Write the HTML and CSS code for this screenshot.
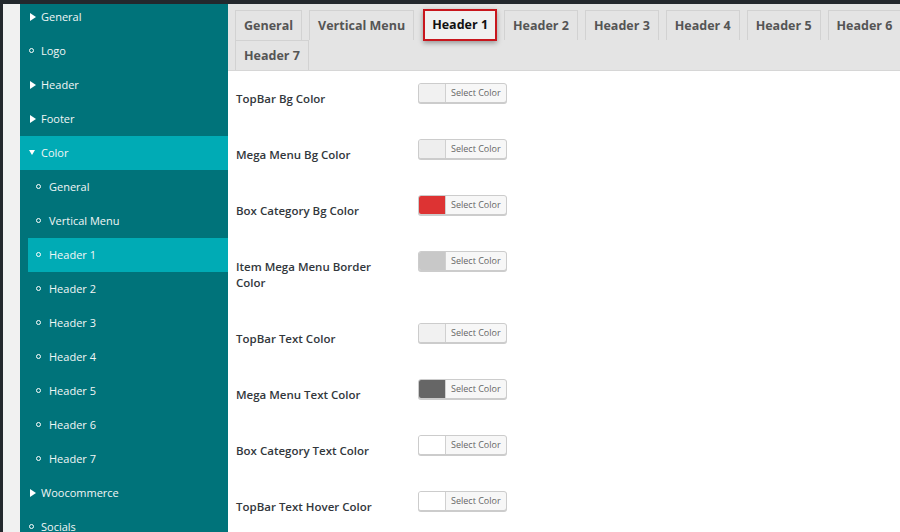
FILE: index.html
```html
<!DOCTYPE html>
<html>
<head>
<meta charset="utf-8">
<link rel="stylesheet" href="styles.css">
</head>
<body>
<div class="topbar"></div>
<div class="layout">
  <div class="edge"></div>
  <div class="gutter"></div>
  <nav class="sidebar">
    <div class="item first"><span class="ico tri-r"></span><span>General</span></div>
    <div class="item"><span class="ico ring"></span><span>Logo</span></div>
    <div class="item"><span class="ico tri-r"></span><span>Header</span></div>
    <div class="item"><span class="ico tri-r"></span><span>Footer</span></div>
    <div class="item active"><span class="ico tri-d"></span><span>Color</span></div>
    <div class="sub">
      <div class="item"><span class="ico ring"></span><span>General</span></div>
      <div class="item"><span class="ico ring"></span><span>Vertical Menu</span></div>
      <div class="item active"><span class="ico ring"></span><span>Header 1</span></div>
      <div class="item"><span class="ico ring"></span><span>Header 2</span></div>
      <div class="item"><span class="ico ring"></span><span>Header 3</span></div>
      <div class="item"><span class="ico ring"></span><span>Header 4</span></div>
      <div class="item"><span class="ico ring"></span><span>Header 5</span></div>
      <div class="item"><span class="ico ring"></span><span>Header 6</span></div>
      <div class="item"><span class="ico ring"></span><span>Header 7</span></div>
    </div>
    <div class="item"><span class="ico tri-r"></span><span>Woocommerce</span></div>
    <div class="item"><span class="ico ring"></span><span>Socials</span></div>
  </nav>
  <main class="main">
    <div class="tabs">
      <div class="tab">General</div>
      <div class="tab">Vertical Menu</div>
      <div class="tab current">Header 1</div>
      <div class="tab">Header 2</div>
      <div class="tab">Header 3</div>
      <div class="tab">Header 4</div>
      <div class="tab">Header 5</div>
      <div class="tab">Header 6</div>
      <div class="tab">Header 7</div>
    </div>
    <div class="form">
      <div class="row"><div class="label">TopBar Bg Color</div><div class="picker"><span class="swatch c-f1"></span><span class="txt">Select Color</span></div></div>
      <div class="row"><div class="label">Mega Menu Bg Color</div><div class="picker"><span class="swatch c-ee"></span><span class="txt">Select Color</span></div></div>
      <div class="row"><div class="label">Box Category Bg Color</div><div class="picker"><span class="swatch c-red"></span><span class="txt">Select Color</span></div></div>
      <div class="row"><div class="label">Item Mega Menu Border Color</div><div class="picker"><span class="swatch c-c8"></span><span class="txt">Select Color</span></div></div>
      <div class="row"><div class="label">TopBar Text Color</div><div class="picker"><span class="swatch c-f1"></span><span class="txt">Select Color</span></div></div>
      <div class="row"><div class="label">Mega Menu Text Color</div><div class="picker"><span class="swatch c-66"></span><span class="txt">Select Color</span></div></div>
      <div class="row"><div class="label">Box Category Text Color</div><div class="picker"><span class="swatch c-ff"></span><span class="txt">Select Color</span></div></div>
      <div class="row"><div class="label">TopBar Text Hover Color</div><div class="picker"><span class="swatch c-ff"></span><span class="txt">Select Color</span></div></div>
    </div>
  </main>
</div>
</body>
</html>
```
FILE: styles.css
```css
html, body {
  margin: 0;
  padding: 0;
  overflow: hidden;
  background: #fff;
  font-family: "Open Sans", "Noto Sans", sans-serif;
}
.topbar {
  height: 4px;
  background: #23282d;
}
.layout {
  display: flex;
  width: 950px;
  height: 528px;
  overflow: hidden;
}
.edge {
  width: 3px;
  background: #23282d;
  flex: none;
}
.gutter {
  width: 17px;
  background: #f1f1f1;
  flex: none;
}
.sidebar {
  width: 208px;
  flex: none;
  background: #00737a;
  color: #f2f6f6;
  font-size: 11px;
}
.item {
  height: 34px;
  display: flex;
  align-items: center;
  padding-left: 9px;
  padding-bottom: 1px;
  box-sizing: border-box;
}
.item.first {
  height: 30px;
  padding-bottom: 5px;
}
.item.active {
  background: #00abb5;
}
.sub {
  margin-left: 8px;
}
.sub .item {
  padding-left: 8px;
}
.ico {
  width: 7px;
  height: 8px;
  margin-right: 5px;
  flex: none;
  display: flex;
  align-items: center;
}
.sub .ico {
  width: 8px;
}
.tri-r::before {
  content: "";
  margin-left: 1px;
  border-left: 6px solid #fff;
  border-top: 4px solid transparent;
  border-bottom: 4px solid transparent;
}
.tri-d::before {
  content: "";
  border-top: 5px solid #fff;
  border-left: 3.5px solid transparent;
  border-right: 3.5px solid transparent;
}
.ring::before {
  content: "";
  flex: none;
  width: 3.4px;
  height: 3.4px;
  border: 1.9px solid #fff;
  border-radius: 50%;
}
.main {
  flex: 1;
  min-width: 0;
}
.tabs {
  background: #e4e4e4;
  padding: 6px 0 0 7px;
  display: flex;
  flex-wrap: wrap;
  column-gap: 7px;
  border-bottom: 1px solid #d6d6d6;
}
.tab {
  height: 30px;
  line-height: 30px;
  padding: 0 8px;
  border: 1px solid #d2d2d2;
  border-bottom: none;
  box-sizing: border-box;
  font-size: 12.5px;
  font-weight: 700;
  color: #555;
}
.tab.current {
  border: 2px solid #c8161d;
  background: #f0f0f0;
  color: #111;
  line-height: 28px;
  height: 32px;
  margin-top: -1px;
  margin-bottom: -2px;
  box-shadow: 0 2px 5px rgba(0, 0, 0, 0.35);
  padding: 0 7px;
  margin-left: 2px;
}
.form {
  padding-left: 8px;
}
.row {
  display: flex;
  align-items: flex-start;
}
.label {
  width: 150px;
  margin-right: 32px;
  padding: 19.5px 0 20.5px;
  font-size: 11.5px;
  line-height: 16px;
  font-weight: 600;
  color: #32373c;
}
.picker {
  margin-top: 12px;
  display: flex;
  height: 20px;
  box-sizing: border-box;
  border: 1px solid #cccccc;
  border-radius: 3px;
  background: #f7f7f7;
  box-shadow: 0 1px 0 #cccccc;
  overflow: hidden;
}
.swatch {
  width: 26px;
  border-right: 1px solid #d0d0d0;
}
.txt {
  padding: 0 5px;
  font-size: 9px;
  line-height: 18px;
  color: #666;
}
.c-f1 { background: #f1f1f1; }
.c-ee { background: #eeeeee; }
.c-red { background: #dd3333; }
.c-c8 { background: #c8c8c8; }
.c-66 { background: #666666; }
.c-ff { background: #ffffff; }
```
